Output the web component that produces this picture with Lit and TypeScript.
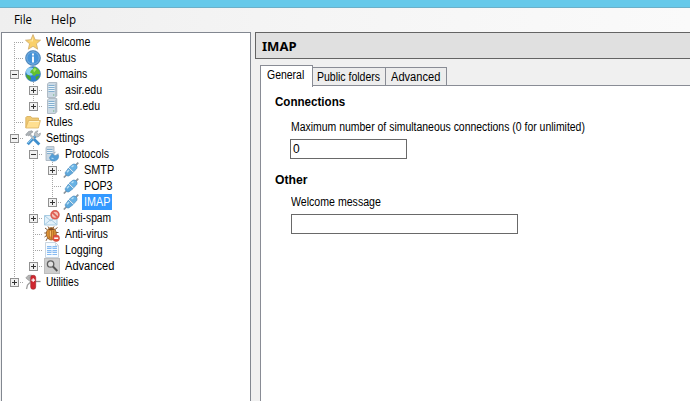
import { LitElement, html, css, svg, nothing } from "lit";
import { customElement, property } from "lit/decorators.js";
import { classMap } from "lit/directives/class-map.js";

/** Text condensed or stretched horizontally so that it fills a given width. */
@customElement("fit-text")
class FitText extends LitElement {
  @property({ type: Number }) width = 0;
  @property() text = "";
  static styles = css`
    :host { display: inline-block; white-space: pre; }
    span { display: inline-block; transform-origin: 0 0; }
  `;
  render() { return html`<span>${this.text}</span>`; }
  updated() {
    const span = this.renderRoot.querySelector("span") as HTMLElement;
    this.style.width = `${this.width}px`;
    span.style.transform = `scaleX(${this.width / span.offsetWidth})`;
  }
}

const plug = svg`
  <path d="M.8 15.500 4 12.300M12.300 3.700 15.300.6" stroke="#8b959d" stroke-width="1.700"/>
  <path d="M2.300 10.500 5.600 6l4.600 4.600-4.400 3.300c-1.500.6-4.200-1.700-3.500-3.400z" fill="#5fa9dc" stroke="#4a8dc0" stroke-width=".7"/>
  <path d="M6.200 5.200 9.800 2.300c2.600-1 5 1.500 4 4L10.800 9.800z" fill="#67b2e4" stroke="#4a8dc0" stroke-width=".7"/>
  <path d="M5.800 5.600l4.800 4.800" stroke="#e6f3fb" stroke-width="1"/>
  <path d="M4 10.300l2-2.300M8.600 5l2-1.500" stroke="#b9e0f6" stroke-width="1.400"/>`;

const server = svg`
  <path d="M3.500 2 4.800.5h8v13.200l-1.500 1.800H3.500z" fill="#cbd9e4" stroke="#a3b0bb" stroke-width=".8"/>
  <path d="M11.300 2v13.200l1.300-1.600V.9z" fill="#a9b7c3"/>
  <path d="M4.500 3.500h6M4.500 5.500h6M4.500 7.500h6M4.500 9.500h6" stroke="#83afd0"/>
  <path d="M4.500 4.500h6M4.500 6.500h6M4.500 8.500h6" stroke="#e9f3f9"/>
  <path d="M9 13h1.300" stroke="#69b278"/>`;

const icons: Record<string, unknown> = {
  star: svg`<path d="M8 .6 10.100 5.700l5.400.5-4.100 3.600 1.300 5.400L8 12.300l-4.700 2.900 1.300-5.400L.5 6.200l5.400-.5z" fill="#fad06a" stroke="#cda867" stroke-width=".8"/>
    <path d="M8 2.800 6.700 6.500 3 7l5 .5z" fill="#ffe9a6"/>`,
  info: svg`<circle cx="8" cy="8" r="7.500" fill="#2c74bb" stroke="#5a8fbd" stroke-width=".7"/>
    <circle cx="8" cy="8" r="6.300" fill="#4794d8" stroke="#9cc6e8" stroke-width=".7"/>
    <path d="M8 3.500v2M8 6.500v6" stroke="#fff" stroke-width="1.900"/>`,
  globe: svg`<circle cx="8" cy="8" r="7.500" fill="#2f80cf" stroke="#4d87b8" stroke-width=".7"/>
    <ellipse cx="5.500" cy="5.500" rx="4.500" ry="4" fill="#8fd0f6"/>
    <path d="M9 .9c3.500.5 6 3.300 6.200 6.600l-1.500 1-2-.6L9.500 10 8 9.500 7 7.500 5 6.500l1-2L8 3z" fill="#62c02f"/>
    <path d="M1 8.500 4 9.200 6 11.500 5.500 14.500C3 13.500 1.200 11.500 1 8.500zM10.500 11l2.500-1.500 1.500.3c-.5 1.800-1.800 3.300-3.500 4.200z" fill="#4ea62d"/>
    <path d="M8 3.500l2-1.500 1.500 1.500-2.500 3z" fill="#a6e264"/>`,
  server,
  folder: svg`<path d="M.8 13.800V3.500l1-1h4l1.200 1.500h6.500v2" fill="#efc973" stroke="#d6ac58" stroke-width=".8"/>
    <path d="M3.500 6.500h11.900l-2 7.500H.8z" fill="#ffdf90" stroke="#dbb161" stroke-width=".8"/>
    <path d="M4.300 7.500h9.700" stroke="#fff2c8"/>`,
  tools: svg`<path d="M10.500 6 2.700 14.200" stroke="#4793ce" stroke-width="3"/>
    <path d="M9.500 6.200 3 13" stroke="#8ccaf0" stroke-width="1"/>
    <path d="M8.800 9l5.500 5.500" stroke="#3e8fce" stroke-width="2.800"/>
    <path d="M4 3.500 9 9" stroke="#b3b9bd" stroke-width="2"/>
    <path d="M.8 4.500 3.500 1.500 7 .8 8 2 5 4 3.800 6 2.500 5 1.500 6z" fill="#adb2b6" stroke="#8c9297" stroke-width=".6"/>
    <path d="M9.500 5.500C8.800 3 10.500.9 13 .8l-1.200 2 1.400 1.500L15.400 3c.3 2.500-1.700 4.300-4 4z" fill="#bec3c7" stroke="#8f959a" stroke-width=".6"/>`,
  protocols: svg`<path d="M2 1.500 3 .6h7v12.500L8.500 14.500H2z" fill="#cbd9e4" stroke="#a3b0bb" stroke-width=".8"/>
    <path d="M3 3.500h5.500M3 5.500h5.500M3 7.500h5.500" stroke="#83afd0"/><path d="M3 4.500h5.500M3 6.500h5.500" stroke="#e9f2f8"/>
    <path d="M5.500 11.500 8.200 7.700l2.500 2 3.600-1.200c1.400 4-1.800 6.900-5.300 6.600-1.800 0-3.200-1.500-3.500-3.600z" fill="#559fd7" stroke="#4a8dc0" stroke-width=".6"/>
    <path d="M10 7.500l1.500-1.700M12.300 9.200l2-1.500" stroke="#8fa3b3"/><path d="M7.500 12l2 .7" stroke="#b5ddf5" stroke-width="1.200"/>`,
  plug,
  spam: svg`<path d="M.5 5.500h12.500v9.500H.5z" fill="#e3f1fa" stroke="#a0c6df" stroke-width=".9"/>
    <path d="M.8 14.600 6.800 9.500l6 5.100M.8 5.800l6 5 6-5" fill="none" stroke="#a0c6df" stroke-width=".9"/>
    <circle cx="11" cy="4.800" r="3.900" fill="#f3c3b9" stroke="#de5f54" stroke-width="1.700"/>
    <path d="M8.300 2.300l5.400 5" stroke="#de5f54" stroke-width="1.700"/>`,
  virus: svg`<path d="M3 3.500 1 2M11 3.500 13.500 1.500M2.500 7H.3M2.500 9.500.5 11M3.500 12 2 14.800M12 6.500h2.500M5 2 4 .5M9 2 10 .5" stroke="#7d583a" stroke-width="1"/>
    <ellipse cx="7.300" cy="7.800" rx="5" ry="6.200" fill="#df9436" stroke="#8c5423" stroke-width=".8"/>
    <path d="M4 4q3.300-4 6.600 0z" fill="#7b4a25"/>
    <path d="M5.300 4.500v8M7.300 4v9.500M9.700 4.500v8" stroke="#9c5c1c" stroke-width=".7"/>
    <path d="M6.300 5v5.500" stroke="#ffcf7a" stroke-width="1"/>
    <circle cx="12.200" cy="12.200" r="3.300" fill="#e2503b" stroke="#c84a3a" stroke-width=".6"/>
    <path d="M10.200 12.200h4" stroke="#fff" stroke-width="1.500"/>`,
  log: svg`<path d="M1.500.5h10l3 3v12h-13z" fill="#f8fcff" stroke="#c3d0dc" stroke-width=".9"/>
    <path d="M11.500.8v3h3" fill="none" stroke="#c3d0dc" stroke-width=".8"/>
    <path d="M3 4.500h4.500M3 6.500h4.500M3 8.500h4.500M3 10.500h4.500M3 12.500h4.500M8.500 4.500h4.500M8.500 6.500h4.500M8.500 8.500h4.500M8.500 10.500h4.500M8.500 12.500h4.500" stroke="#86bbf3"/>
    <path d="M3 5.500h10M3 9.500h10" stroke="#cfe4fa"/>`,
  search: svg`<rect x=".5" y=".5" width="15" height="15" fill="#cecece" stroke="#bdbdbd"/>
    <circle cx="6.600" cy="6" r="3.200" fill="#e0e0e0" stroke="#606060" stroke-width="1.300"/>
    <path d="M9 8.500l4.300 4.500" stroke="#555" stroke-width="1.900"/>`,
  knife: svg`<path d="M.8 4 3 1.500 6.500 1 8 2.500 4.500 3.500l2 3.500-1 .8z" fill="#b4b4b4" stroke="#8c8c8c" stroke-width=".6"/>
    <path d="M5 8.500 2.500 11 1.500 15" fill="none" stroke="#a0a0a0" stroke-width="1.300"/>
    <path d="M10.500 7.500h5" stroke="#8e8e8e" stroke-width="1.300"/>
    <rect x="5.700" y="1.300" width="5" height="14" rx="2.300" fill="#d0262f" stroke="#9b2027" stroke-width=".6"/>
    <path d="M8.200 4.300v3.600M6.400 6.100h3.600" stroke="#fff" stroke-width="1.100"/>`,
};

// Guide per depth level: "v" line, "t" line with branch, "s" first row, "l" last branch
interface Row { g: string; icon: string; text: string; w: number; box?: "+" | "-"; on?: boolean }
const rows: Row[] = [
  { g: "s", icon: "star", text: "Welcome", w: 44.5 },
  { g: "t", icon: "info", text: "Status", w: 30 },
  { g: "t", icon: "globe", text: "Domains", w: 41, box: "-" },
  { g: "vt", icon: "server", text: "asir.edu", w: 37, box: "+" },
  { g: "vl", icon: "server", text: "srd.edu", w: 35, box: "+" },
  { g: "t", icon: "folder", text: "Rules", w: 27 },
  { g: "t", icon: "tools", text: "Settings", w: 38, box: "-" },
  { g: "vt", icon: "protocols", text: "Protocols", w: 44, box: "-" },
  { g: "vvt", icon: "plug", text: "SMTP", w: 30, box: "+" },
  { g: "vvt", icon: "plug", text: "POP3", w: 28.5 },
  { g: "vvl", icon: "plug", text: "IMAP", w: 26, box: "+", on: true },
  { g: "vt", icon: "spam", text: "Anti-spam", w: 46, box: "+" },
  { g: "vt", icon: "virus", text: "Anti-virus", w: 43 },
  { g: "vt", icon: "log", text: "Logging", w: 38 },
  { g: "vl", icon: "search", text: "Advanced", w: 49, box: "+" },
  { g: "l", icon: "knife", text: "Utilities", w: 33, box: "+" },
];

@customElement("app-root")
class AppRoot extends LitElement {
  static styles = css`
    * { box-sizing: border-box; }
    :host { display: flex; flex-direction: column; width: 690px; height: 401px; overflow: hidden;
      background: #f0f0f0; color: #000; font: 12px/16px "Liberation Sans", Arial, sans-serif; }
    .title { flex: none; height: 8px; background: #66c9ea; border-bottom: 1px solid #6bb0c9; }
    .menu { flex: none; height: 24px; display: flex; gap: 19px; padding: 4px 0 0 14px;
      background: linear-gradient(90deg, #efefef, #f5f5f5 45%, #fafafa);
      font-family: "Open Sans", "Noto Sans", sans-serif; }
    .body { flex: 1; display: flex; min-height: 0; }
    .tree { flex: none; width: 250px; margin-left: 1px; padding: 1px 0 0 3px; background: #fff;
      border: 1px solid #828790; border-bottom: 0; }
    .row { display: flex; height: 16px; }
    .g { flex: none; width: 19px; height: 16px; display: grid; grid-template-columns: 9px 1px 9px; }
    .line { grid-column: 2; background: repeating-linear-gradient(#a6a6a6 0 1px, #fff 1px 2px); }
    .s .line { margin-top: 8px; }
    .l .line { height: 9px; }
    .branch { grid-column: 3; height: 1px; margin-top: 8px;
      background: repeating-linear-gradient(90deg, #fff 0 1px, #a6a6a6 1px 2px); }
    .line, .branch, .box { grid-row: 1; }
    .box { grid-column: 1 / 4; width: 9px; height: 9px; margin: 4px 0 0 5px;
      background: #f1f1f1; border: 1px solid #919191; z-index: 1; }
    .box svg { display: block; }
    .icon { flex: none; width: 16px; height: 16px; margin: 0 3px 0 1px; }
    .name { padding: 0 2px; height: 16px; line-height: 17px; }
    .name.on { background: #39f; color: #fff; }
    .main { flex: 1; min-width: 0; margin-left: 4px; display: flex; flex-direction: column; }
    .head { flex: none; height: 27px; border: 1px solid #646464; border-right: 0; background: #e0e0e0;
      padding: 5px 0 0 6px; font: bold 12.5px/18px "Noto Sans", sans-serif; }
    .tabs { flex: none; height: 27px; display: flex; align-items: flex-end; margin-left: 5px; padding-top: 6px; }
    .tab { width: 73px; height: 19px; padding: 1px 0 0 4px; border: 1px solid #898c95; border-left: 0;
      background: #ededed; }
    .tab.first { position: relative; width: 53px; height: 22px; margin-bottom: -1px; padding: 1px 0 0 6px;
      border-left: 1px solid #898c95; border-bottom: 0; background: #fff; }
    .tab.last { width: 61px; padding-left: 5px; }
    .rest { flex: 1; height: 1px; background: #898c95; }
    .page { flex: 1; margin-left: 5px; padding: 8px 0 0 14px; background: #fff; border-left: 1px solid #898c95; }
    .h { font-weight: bold; height: 16px; }
    .label { height: 16px; margin: 9px 0 0 16px; }
    .h.other { margin-top: 13px; }
    .label.msg { margin-top: 6px; }
    .field { height: 20px; width: 117px; margin: 4px 0 0 15px; border: 1px solid #696969; background: #fff; padding: 1px 2px; }
    .field.wide { width: 227px; margin-left: 16px; }
    fit-text { vertical-align: top; }
  `;

  private row(r: Row) {
    const last = r.g.length - 1;
    return html`<div class="row">
      ${[...r.g].map((k, i) => html`<div class="g ${k}">
        <div class="line"></div>
        ${i === last ? html`<div class="branch"></div>` : nothing}
        ${i === last && r.box ? html`<div class="box"><svg width="7" height="7" stroke="#333">
          <path d=${r.box === "+" ? "M1 3.5h5M3.5 1v5" : "M1 3.5h5"} /></svg></div>` : nothing}
      </div>`)}
      <svg class="icon" viewBox="0 0 16 16" fill="none">${icons[r.icon]}</svg>
      <div class=${classMap({ name: true, on: !!r.on })}><fit-text .width=${r.w} .text=${r.text}></fit-text></div>
    </div>`;
  }

  render() {
    const t = (text: string, width: number) => html`<fit-text .width=${width} .text=${text}></fit-text>`;
    return html`
      <div class="title"></div>
      <div class="menu">${t("File", 18)}${t("Help", 25)}</div>
      <div class="body">
        <div class="tree">${rows.map((r) => this.row(r))}</div>
        <div class="main">
          <div class="head">${t("IMAP", 34.5)}</div>
          <div class="tabs">
            <div class="tab first">${t("General", 37.5)}</div>
            <div class="tab">${t("Public folders", 63)}</div>
            <div class="tab last">${t("Advanced", 49)}</div>
            <div class="rest"></div>
          </div>
          <div class="page">
            <div class="h">${t("Connections", 70.5)}</div>
            <div class="label">${t("Maximum number of simultaneous connections (0 for unlimited)", 293.5)}</div>
            <div class="field">${t("0", 7)}</div>
            <div class="h other">${t("Other", 32.5)}</div>
            <div class="label msg">${t("Welcome message", 90)}</div>
            <div class="field wide"></div>
          </div>
        </div>
      </div>`;
  }
}
